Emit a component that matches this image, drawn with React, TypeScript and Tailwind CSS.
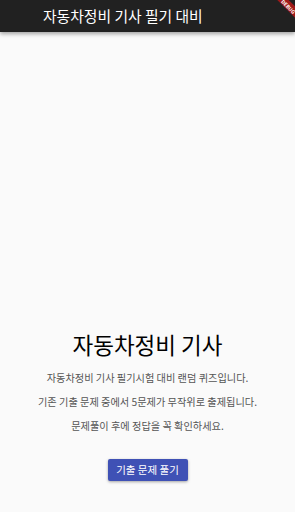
import React from "react";

export default function App() {
  const font = { fontFamily: '"Noto Sans CJK KR", "Noto Sans", sans-serif' };
  return (
    <div className="relative w-[295px] h-[512px] overflow-hidden bg-[#fafafa] flex flex-col" style={font}>
      <div className="h-[32px] bg-[#212121] flex items-center pl-[43px] shadow-[0_2px_4px_rgba(0,0,0,0.35)] z-10 shrink-0">
        <span className="text-white text-[14.8px] leading-none">자동차정비 기사 필기 대비</span>
      </div>
      <div className="flex-1 flex flex-col items-center justify-end pb-[31px]">
        <div className="text-[22.5px] leading-none text-black mb-[11px]">자동차정비 기사</div>
        <div className="text-[10.2px] text-[#555] leading-[24px] text-center flex flex-col items-center">
          <span className="whitespace-nowrap">자동차정비 기사 필기시험 대비 랜덤 퀴즈입니다.</span>
          <span className="whitespace-nowrap">기존 기출 문제 중에서 5문제가 무작위로 출제됩니다.</span>
          <span className="whitespace-nowrap">문제풀이 후에 정답을 꼭 확인하세요.</span>
        </div>
        <button className="mt-[21px] w-[80px] h-[22px] bg-[#3f51b5] text-white text-[10.5px] rounded-[2px] shadow-[0_1px_3px_rgba(0,0,0,0.35)] flex items-center justify-center">
          기출 문제 풀기
        </button>
      </div>
      <div className="absolute top-[2px] right-[-16px] w-[44px] h-[8px] bg-[#a01a1a] rotate-45 flex items-center justify-center z-20">
        <span className="text-white text-[5px] font-bold leading-none">DEBUG</span>
      </div>
    </div>
  );
}
